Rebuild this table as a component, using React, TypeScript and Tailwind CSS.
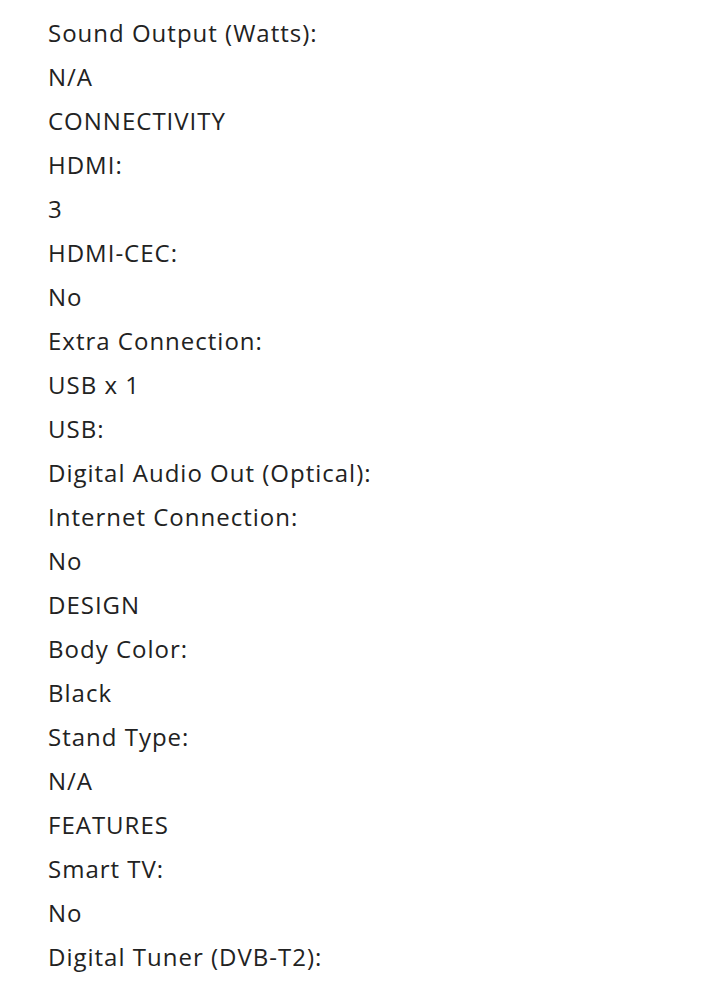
export default function App() {
  const lines = [
    'Sound Output (Watts):',
    'N/A',
    'CONNECTIVITY',
    'HDMI:',
    '3',
    'HDMI-CEC:',
    'No',
    'Extra Connection:',
    'USB x 1',
    'USB:',
    'Digital Audio Out (Optical):',
    'Internet Connection:',
    'No',
    'DESIGN',
    'Body Color:',
    'Black',
    'Stand Type:',
    'N/A',
    'FEATURES',
    'Smart TV:',
    'No',
    'Digital Tuner (DVB-T2):',
  ]

  return (
    <div className="min-h-[1006px] bg-white pl-12 pt-[11px] text-[#222] font-['Open_Sans',sans-serif] text-[24px] leading-[44px] tracking-[1px]">
      {lines.map((line, i) => (
        <div key={i}>{line}</div>
      ))}
    </div>
  )
}
